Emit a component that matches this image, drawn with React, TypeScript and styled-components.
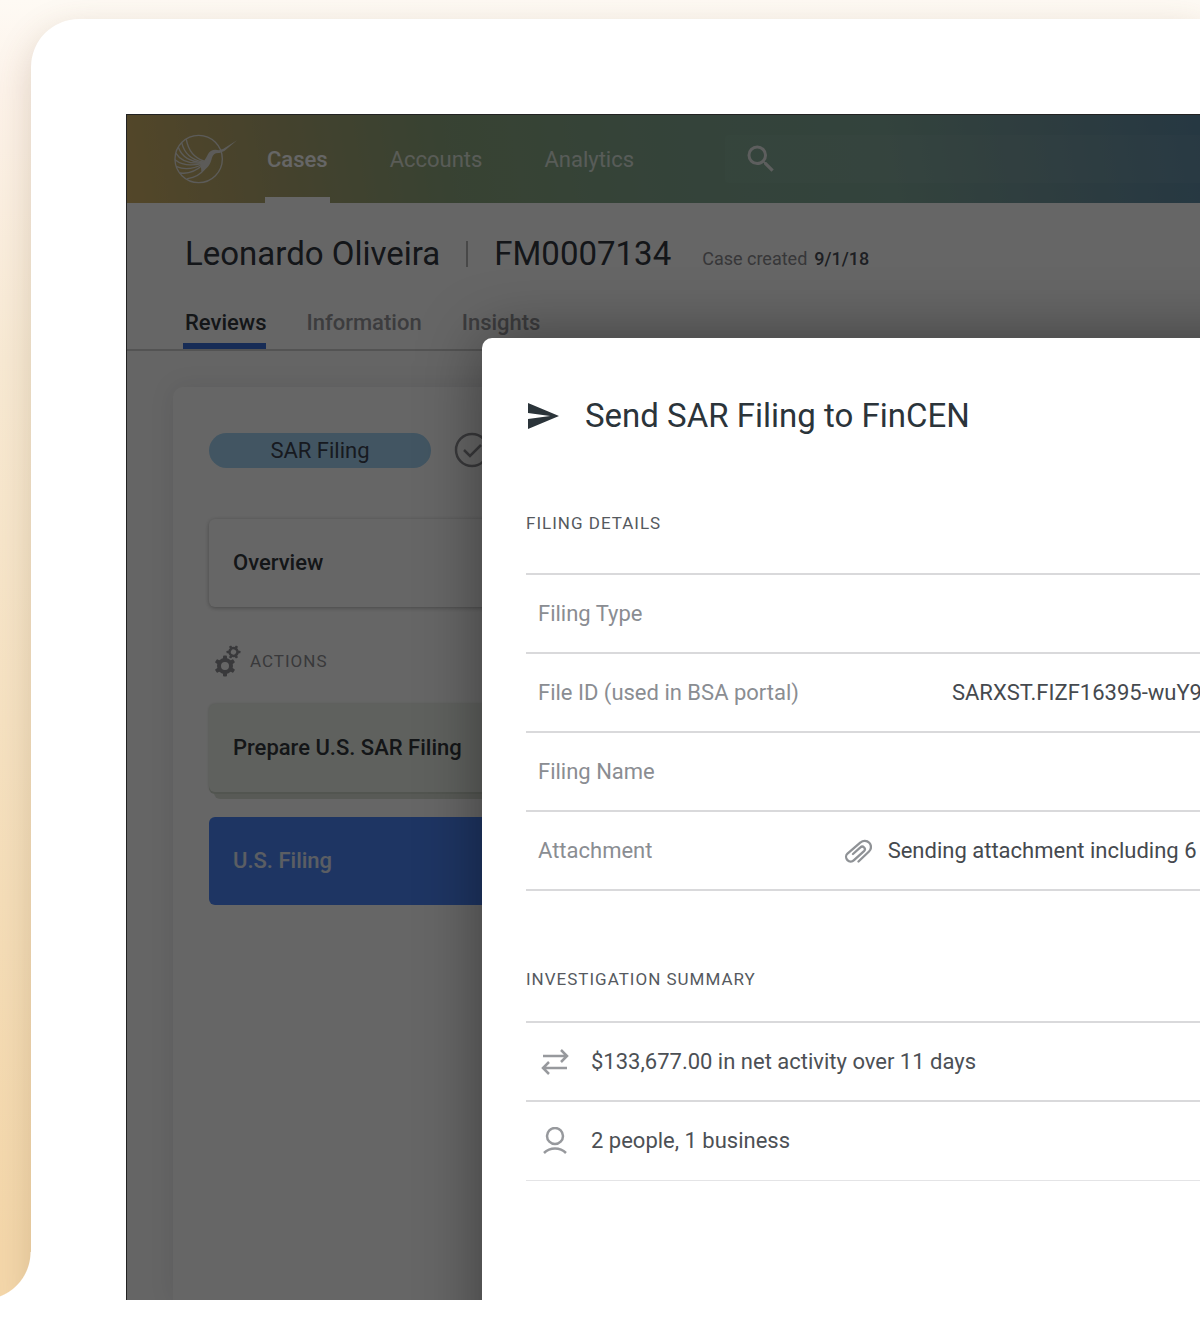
import React from "react";
import styled, { createGlobalStyle } from "styled-components";
import { MdSearch } from "react-icons/md";

const GlobalStyle = createGlobalStyle`
  *, *::before, *::after { box-sizing: border-box; }
  body {
    margin: 0;
    background: #fff;
    font-family: Roboto, "Liberation Sans", sans-serif;
    font-size: 22px;
    line-height: 26px;
    color: #32373c;
  }
  h1, h2, h3, p { margin: 0; font-weight: 400; }
`;

const Page = styled.div`
  display: flex;
  min-height: 100vh;
  padding-bottom: 19px;
  overflow: hidden;
`;

const Backdrop = styled.div`
  flex: 1;
  min-width: 0;
  display: flex;
  padding: 19px 0 0 31px;
  overflow: hidden;
  background: linear-gradient(180deg, #fefaf4 0, #fdf3ea 90px, #f8ead4 360px, #f5deb9 900px, #f4d7aa 1250px);
`;

const Card = styled.main`
  position: relative;
  flex: 1;
  min-width: 0;
  display: flex;
  padding: 95px 0 0 95px;
  background: #fff;
  border-radius: 48px 0 0 0;
  box-shadow: 0 12px 36px rgba(110, 80, 50, 0.22);

  &::before {
    content: "";
    position: absolute;
    left: -31px;
    bottom: 0;
    width: 31px;
    height: 48px;
    background: radial-gradient(circle at -17px 0, transparent 47px, #fff 48px);
  }
`;

const Screen = styled.div`
  position: relative;
  flex: 1;
  min-width: 0;
  display: flex;
  flex-direction: column;
  overflow: hidden;
  background: #fcfcfc;
`;

const Scrim = styled.div`
  position: absolute;
  inset: 0;
  background: rgba(0, 0, 0, 0.6);
  border: solid #222;
  border-width: 1px 0 0 1px;
`;

const TopBar = styled.header`
  display: flex;
  align-items: center;
  height: 89px;
  padding-left: 47px;
  background: linear-gradient(80deg, #d0b066 0%, #aea670 14%, #8ca67e 30%, #83a990 50%, #80a898 70%, #74999e 84%, #5f8ca6 100%);
`;

const Nav = styled.nav`
  display: flex;
  align-self: stretch;
  gap: 58px;
  margin-left: 28px;
`;

const NavLink = styled.a<{ $active?: boolean }>`
  display: flex;
  align-items: center;
  padding: 8px 2px 0;
  border-bottom: 6px solid ${(p) => (p.$active ? "#fff" : "transparent")};
  color: ${(p) => (p.$active ? "#fff" : "rgba(255, 255, 255, 0.72)")};
  font-weight: ${(p) => (p.$active ? 500 : 400)};
  text-decoration: none;
`;

const Search = styled.label`
  flex: 1;
  min-width: 0;
  display: flex;
  align-items: center;
  height: 48px;
  margin-left: 89px;
  padding-left: 18px;
  border-radius: 4px 0 0 4px;
  background: rgba(255, 255, 255, 0.04);
  color: #e8ecea;
`;

const SearchInput = styled.input`
  flex: 1;
  min-width: 0;
  border: 0;
  outline: 0;
  background: transparent;
  color: inherit;
  font: inherit;
`;

const CaseHeader = styled.section`
  height: 148px;
  padding: 31px 0 0 57px;
  background: #fff;
  border-bottom: 2px solid #d0d0d0;
`;

const CaseTitle = styled.div`
  display: flex;
  align-items: baseline;
  height: 40px;
  color: #32373f;
  font-size: 33px;
  line-height: 40px;
  white-space: nowrap;
`;

const CaseName = styled.h1`
  padding-left: 2px;
  font-size: 33px;
`;

const Divider = styled.span`
  align-self: center;
  width: 2px;
  height: 26px;
  margin: 0 26px;
  background: #b4b4b4;
`;

const Created = styled.span`
  margin-left: 31px;
  color: #8a8a8e;
  font-size: 18px;
`;

const CreatedDate = styled.time`
  margin-left: 7px;
  color: #4b4f57;
  font-weight: 500;
`;

const Tabs = styled.nav`
  display: flex;
  gap: 38px;
  height: 75px;
`;

const Tab = styled.a<{ $active?: boolean }>`
  display: flex;
  align-items: center;
  padding: 29px 0 0 2px;
  border-bottom: 6px solid ${(p) => (p.$active ? "#3b6fd8" : "transparent")};
  color: ${(p) => (p.$active ? "#32373c" : "#97979b")};
  font-weight: 500;
  text-decoration: none;
`;

const Sidebar = styled.aside`
  flex: 1;
  margin: 36px 0 0 47px;
  padding: 45px 0 0 36px;
  background: #fff;
  border-radius: 10px 0 0 0;
  box-shadow: 0 0 24px rgba(30, 30, 50, 0.1);
`;

const StatusRow = styled.div`
  display: flex;
  align-items: center;
  gap: 23px;
  color: #8f8f94;
`;

const Pill = styled.span`
  width: 222px;
  border-radius: 18px;
  background: #a5d5f5;
  color: #3b4250;
  line-height: 35px;
  text-align: center;
`;

const Step = styled.button<{ $tone?: "done" | "active" }>`
  display: block;
  width: 100%;
  height: 88px;
  padding: 0 24px;
  border: 0;
  border-radius: 6px 0 0 6px;
  background: ${(p) => (p.$tone === "active" ? "#4b86f7" : p.$tone === "done" ? "#eef3ea" : "#fff")};
  box-shadow: ${(p) =>
    p.$tone === "active"
      ? "none"
      : p.$tone === "done"
        ? "0 0 3px #ccd3ca, 0 2px 0 #ccd6c9, 5px 7px 0 #dde2d8"
        : "0 1px 4px rgba(0, 0, 0, 0.3)"};
  color: ${(p) => (p.$tone === "active" ? "#e4ebf8" : "#32373c")};
  font: inherit;
  font-weight: 500;
  text-align: left;
`;

const StepList = styled.div`
  display: grid;
  gap: 25px;
  margin-top: 27px;
`;

const Overview = styled.div`
  margin-top: 51px;
`;

const ActionsTitle = styled.h3`
  display: flex;
  align-items: center;
  gap: 9px;
  margin-top: 38px;
  padding-left: 6px;
  height: 32px;
  color: #8f8f94;
  font-size: 17px;
  letter-spacing: 1px;
`;

const DialogShade = styled.div`
  position: absolute;
  inset: 224px -80px -80px 356px;
  border-radius: 10px 0 0 0;
  box-shadow: 0 0 64px rgba(0, 0, 0, 0.4);
`;

const Dialog = styled.section`
  position: absolute;
  inset: 224px 0 0 356px;
  padding: 59px 0 0 44px;
  overflow: hidden;
  border-radius: 10px 0 0 0;
  background: #fff;
`;

const DialogHeader = styled.header`
  display: flex;
  align-items: center;
  gap: 26px;
  padding-left: 2px;
  color: #2b343a;
`;

const DialogTitle = styled.h2`
  font-size: 33px;
  line-height: 38px;
`;

const SectionTitle = styled.h3`
  color: #55595e;
  font-size: 17px;
  letter-spacing: 1px;
`;

const Section = styled.section`
  margin-top: 75px;
`;

const Details = styled.table`
  width: calc(100% + 2px);
  margin-top: 37px;
  border-collapse: collapse;
  border-top: 2px solid #d9d9db;
`;

const Row = styled.tr`
  height: 79px;
  border-bottom: 2px solid #d9d9db;
`;

const Label = styled.th`
  padding: 0 0 0 12px;
  color: #8a8d92;
  font-weight: 400;
  text-align: left;
  white-space: nowrap;
`;

const Value = styled.td`
  padding: 0;
  color: #45494e;
  text-align: right;
  white-space: nowrap;
`;

const WithIcon = styled.span`
  display: flex;
  align-items: center;
  justify-content: flex-end;
  gap: 16px;
`;

const Summary = styled.ul`
  margin: 29px 0 0;
  padding: 0;
  list-style: none;
  border-top: 2px solid #d9d9db;
`;

const SummaryItem = styled.li`
  display: flex;
  align-items: center;
  gap: 22px;
  height: 79px;
  padding-left: 15px;
  border-bottom: 2px solid #d9d9db;
  color: #4c5055;

  &:last-child { border-bottom: 1px solid #e4e4e6; }
`;

const Logo = () => (
  <svg width="64" height="50" viewBox="24 26 192 150" fill="none" stroke="#e6e4de" strokeWidth="4" strokeLinecap="round">
    <circle cx="101" cy="101" r="71" />
    <path d="M64 43c6 32 22 54 52 64" />
    <path d="M50 52c8 32 28 52 64 58" />
    <path d="M40 66c10 28 34 44 74 46" />
    <path d="M33 84c14 24 42 32 80 29" />
    <path d="M31 104c22 18 50 18 82 10" />
    <path d="M35 124c24 10 52 6 79-8" />
    <path d="M46 143c26 4 50-8 70-26" />
    <path d="M104 112c14-2 18-12 24-24 6-13 20-18 34-13l12-4 42-26-38 32-15 6c-13-1-19 4-22 14-5 22-15 34-32 42 0-8-1-18-5-27z" fill="#e6e4de" stroke="none" />
    <path d="M118 132c-12 16-28 24-50 28" />
  </svg>
);

const SendIcon = () => (
  <svg width="31" height="26" viewBox="2 3 21 18" preserveAspectRatio="none" fill="currentColor">
    <path d="M2.01 21 23 12 2.01 3 2 10l15 2-15 2z" />
  </svg>
);

const CheckCircle = () => (
  <svg width="36" height="36" viewBox="0 0 36 36" fill="none" stroke="currentColor" strokeWidth="2.5">
    <circle cx="18" cy="18" r="16" />
    <path d="m10 18 6 6 11-11" />
  </svg>
);

const teeth = [0, 60, 120, 180, 240, 300];
const Gear = ({ x, y, s, turn }: { x: number; y: number; s: number; turn: number }) => (
  <g transform={`translate(${x} ${y}) scale(${s}) rotate(${turn})`}>
    <circle r="6" fill="none" stroke="currentColor" strokeWidth="4" />
    {teeth.map((a) => (
      <rect key={a} x="-2" y="-10.5" width="4" height="4" rx="1" fill="currentColor" transform={`rotate(${a})`} />
    ))}
  </g>
);

const Gears = () => (
  <svg width="26" height="32" viewBox="0 0 26 32">
    <Gear x={10} y={21} s={1} turn={0} />
    <Gear x={18.5} y={7} s={0.66} turn={30} />
  </svg>
);

const Clip = () => (
  <svg width="28" height="26" viewBox="0 0 28 26" fill="none" stroke="#8f9296" strokeWidth="2.3" strokeLinecap="round">
    <path d="M14.500 23.500 25 13.500a6 6 0 0 0-8.500-9L3.500 15.500a4.600 4.600 0 0 0 6.500 6.700L20 13.200a2.600 2.600 0 0 0-3.600-3.800L9 16" />
  </svg>
);

const Transfer = () => (
  <svg width="28" height="28" viewBox="0 0 28 28" fill="none" stroke="#97999d" strokeWidth="2.5">
    <path d="M2 8h24M20 2l6 6-6 6M26 20H2M8 14l-6 6 6 6" />
  </svg>
);

const Person = () => (
  <svg width="28" height="28" viewBox="0 0 28 28" fill="none" stroke="#97999d" strokeWidth="2.5">
    <circle cx="14" cy="9" r="8" />
    <path d="M3 26c6-6 16-6 22 0" />
  </svg>
);

export default function App() {
  return (
    <>
      <GlobalStyle />
      <Page>
        <Backdrop>
          <Card>
            <Screen>
              <TopBar>
                <Logo />
                <Nav aria-label="Main">
                  <NavLink href="#cases" $active>Cases</NavLink>
                  <NavLink href="#accounts">Accounts</NavLink>
                  <NavLink href="#analytics">Analytics</NavLink>
                </Nav>
                <Search>
                  <MdSearch size={36} />
                  <SearchInput type="search" aria-label="Search" />
                </Search>
              </TopBar>
              <CaseHeader>
                <CaseTitle>
                  <CaseName>Leonardo Oliveira</CaseName>
                  <Divider />
                  <span>FM0007134</span>
                  <Created>
                    Case created<CreatedDate>9/1/18</CreatedDate>
                  </Created>
                </CaseTitle>
                <Tabs aria-label="Case">
                  <Tab href="#reviews" $active>Reviews</Tab>
                  <Tab href="#information">Information</Tab>
                  <Tab href="#insights">Insights</Tab>
                </Tabs>
              </CaseHeader>
              <Sidebar>
                <StatusRow>
                  <Pill>SAR Filing</Pill>
                  <CheckCircle />
                </StatusRow>
                <Overview>
                  <Step type="button">Overview</Step>
                </Overview>
                <ActionsTitle>
                  <Gears />
                  ACTIONS
                </ActionsTitle>
                <StepList>
                  <Step type="button" $tone="done">Prepare U.S. SAR Filing</Step>
                  <Step type="button" $tone="active">U.S. Filing</Step>
                </StepList>
              </Sidebar>
              <Scrim />
              <DialogShade />
              <Dialog role="dialog" aria-labelledby="dialog-title">
                <DialogHeader>
                  <SendIcon />
                  <DialogTitle id="dialog-title">Send SAR Filing to FinCEN</DialogTitle>
                </DialogHeader>
                <Section>
                  <SectionTitle>FILING DETAILS</SectionTitle>
                  <Details>
                    <tbody>
                      <Row>
                        <Label scope="row">Filing Type</Label>
                        <Value />
                      </Row>
                      <Row>
                        <Label scope="row">File ID (used in BSA portal)</Label>
                        <Value>SARXST.FIZF16395-wuY9</Value>
                      </Row>
                      <Row>
                        <Label scope="row">Filing Name</Label>
                        <Value />
                      </Row>
                      <Row>
                        <Label scope="row">Attachment</Label>
                        <Value>
                          <WithIcon>
                            <Clip />
                            Sending attachment including 6{"\u00a0"}
                          </WithIcon>
                        </Value>
                      </Row>
                    </tbody>
                  </Details>
                </Section>
                <Section>
                  <SectionTitle>INVESTIGATION SUMMARY</SectionTitle>
                  <Summary>
                    <SummaryItem>
                      <Transfer />
                      $133,677.00 in net activity over 11 days
                    </SummaryItem>
                    <SummaryItem>
                      <Person />2 people, 1 business
                    </SummaryItem>
                  </Summary>
                </Section>
              </Dialog>
            </Screen>
          </Card>
        </Backdrop>
      </Page>
    </>
  );
}
